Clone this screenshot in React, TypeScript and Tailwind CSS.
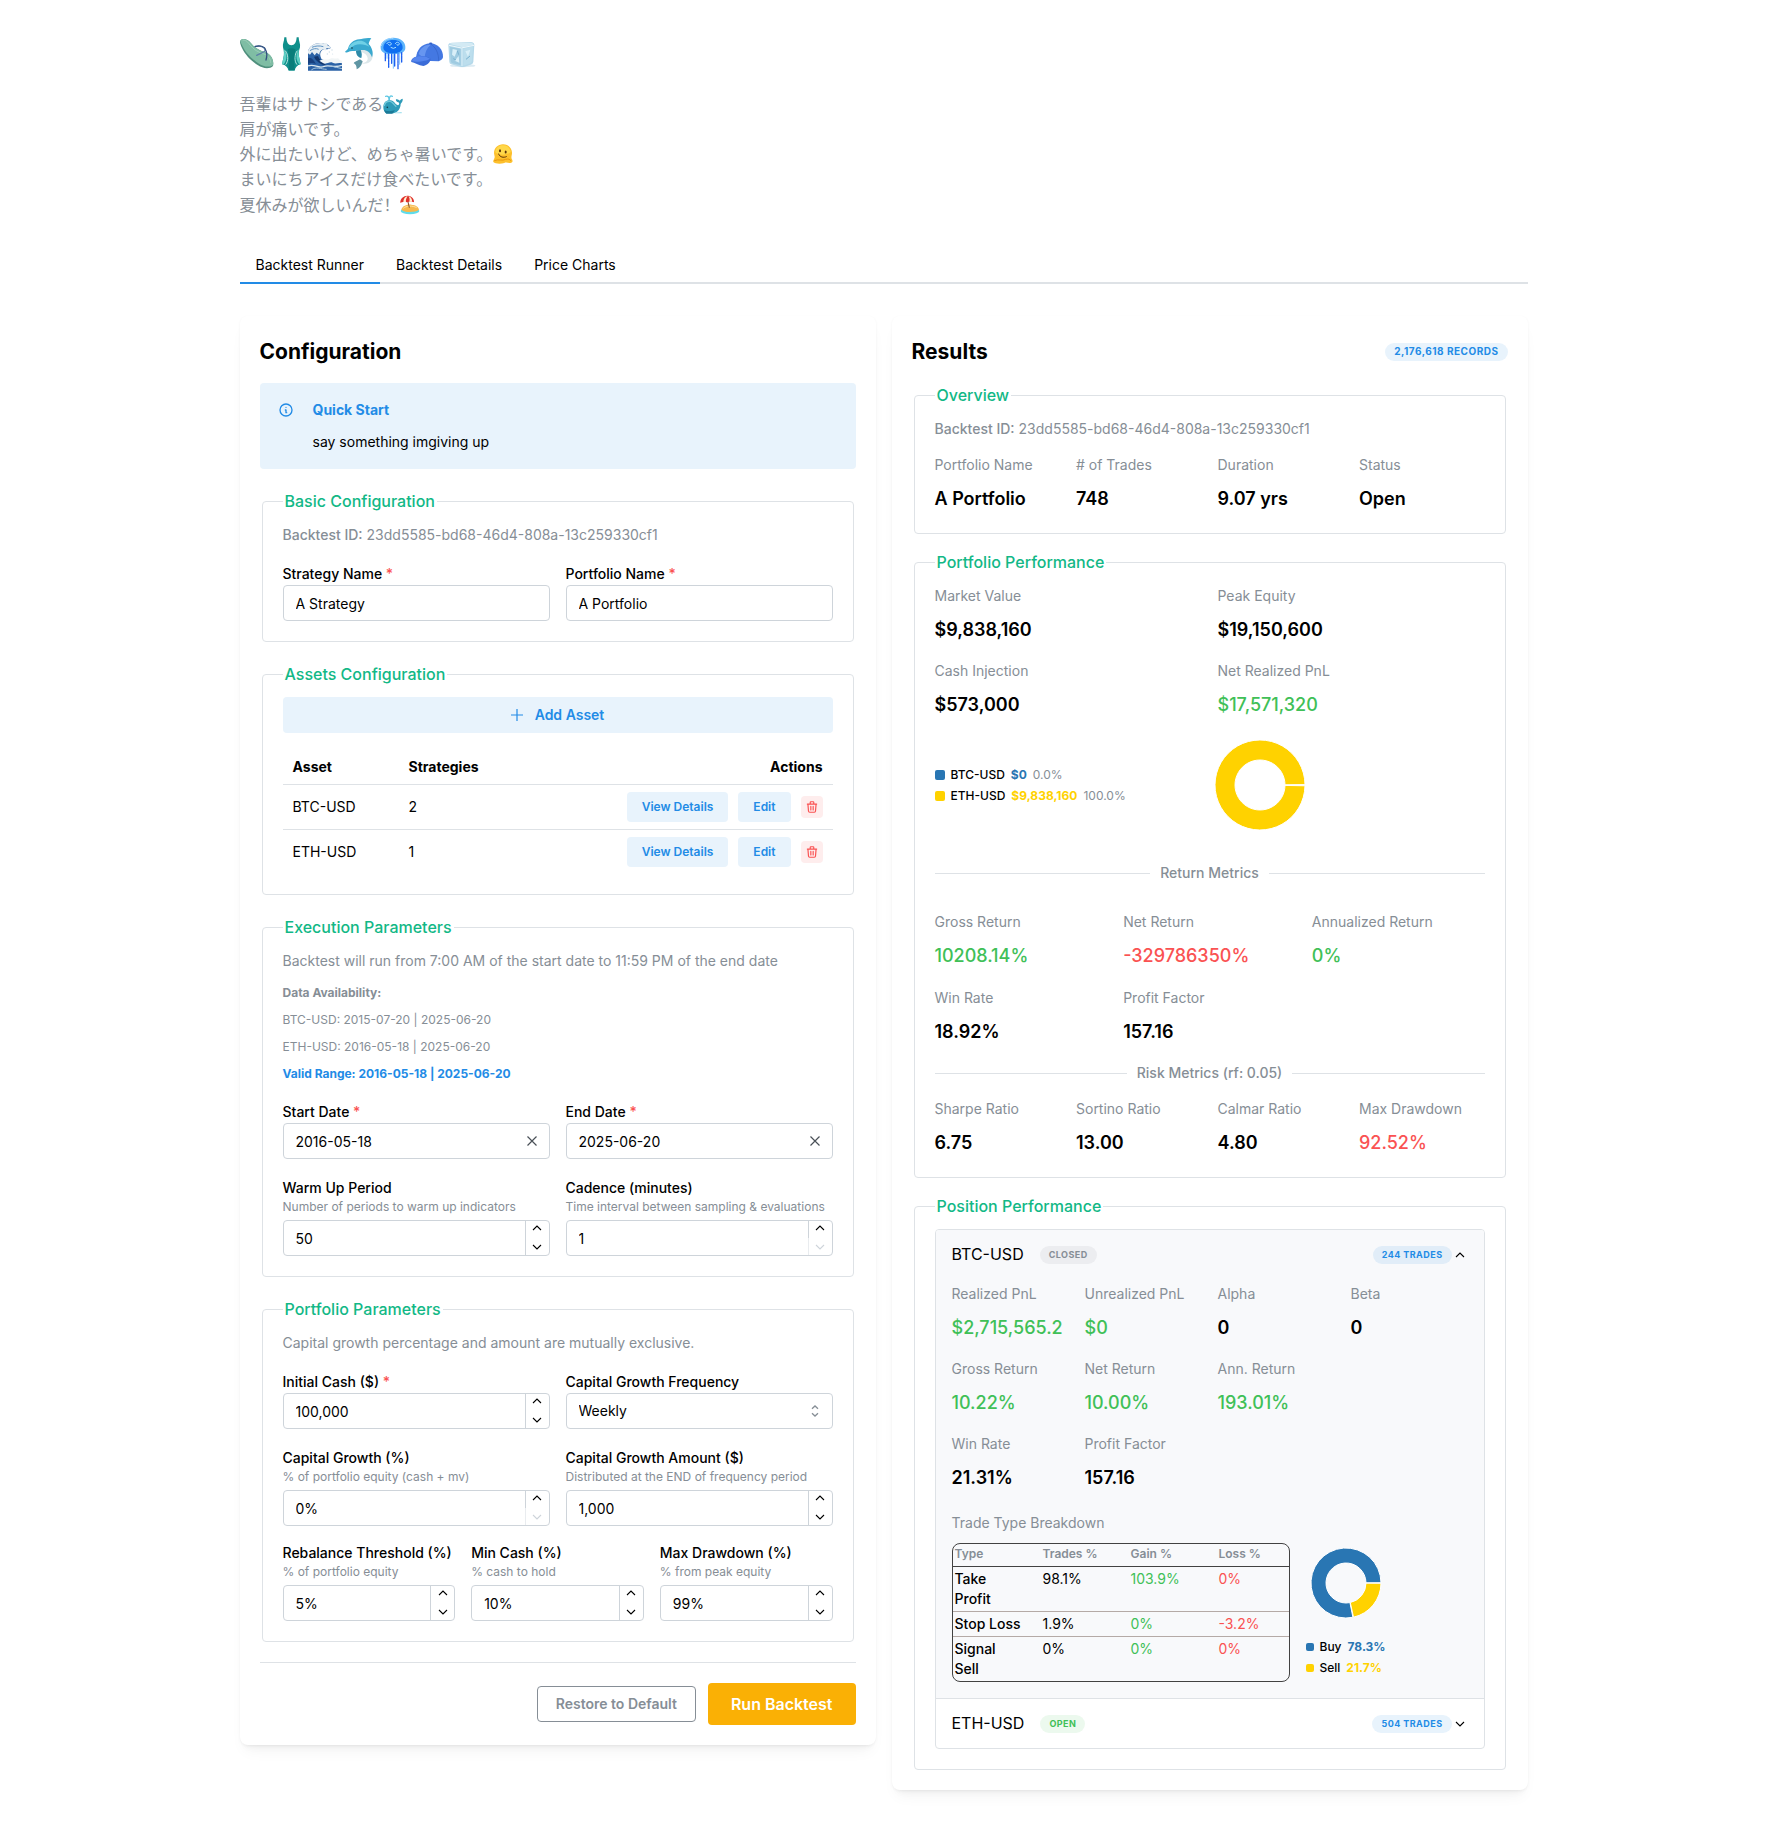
import { useId } from "react";
import type { ReactNode } from "react";

/* ---------- Emoji artwork ---------- */

const FlipFlop = () => (
  <svg viewBox="12 21 102 102" className="size-[34px]" aria-hidden="true">
    <path d="M13 32C17 24 34 26 44 38C54 52 70 62 88 67C106 73 115 92 111 108C102 118 80 116 66 106C46 93 27 74 18 54C13 44 11 37 13 32Z" fill="#4f8f7c" />
    <path d="M14 31C19 24 34 27 44 39C54 53 70 62 88 67C105 73 114 90 111 105C101 113 82 110 69 101C50 89 30 70 21 51C16 41 12 35 14 31Z" fill="#7fbda4" />
    <path d="M20 31C28 29 36 36 42 45C52 58 68 68 84 72C97 76 104 88 104 98" fill="none" stroke="#9ccfb9" strokeWidth="3" />
    <path d="M57 50C72 46 86 50 88 60C87 68 74 68 62 76" fill="none" stroke="#5d7fa8" strokeWidth="4" strokeLinecap="round" />
    <path d="M58 49C74 46 87 50 89 60C94 70 93 80 90 90" fill="none" stroke="#33507f" strokeWidth="4" strokeLinecap="round" />
  </svg>
);

const Swimsuit = () => (
  <svg viewBox="114 21 102 102" className="size-[34px]" aria-hidden="true">
    <path d="M145 22L151 22C152 38 157 46 166 46C176 46 181 38 182 22L188 22C188 34 194 42 192 52C188 64 187 72 190 84L194 103C184 105 178 112 176 122L158 122C155 112 149 105 138 103L142 84C145 72 144 64 141 52C139 42 145 34 145 22Z" fill="#0f8f8b" />
    <path d="M144 58C154 70 154 90 144 102L138 103L142 84C145 72 145 66 144 58Z" fill="#5fd0c5" />
    <path d="M189 58C179 70 179 90 189 102L194 103L190 84C187 72 187 66 189 58Z" fill="#5fd0c5" />
    <path d="M148 62C157 74 158 92 149 104M184 62C175 74 174 92 183 104" fill="none" stroke="#d8f5ee" strokeWidth="2.5" />
    <path d="M155 58C160 75 160 95 158 120L176 120C174 95 174 75 178 58C170 54 162 54 155 58Z" fill="#0a7d7a" />
  </svg>
);

const Wave = () => (
  <svg viewBox="216 21 102 102" className="size-[34px]" aria-hidden="true">
    <path d="M216 62C224 44 244 36 262 40C274 42 282 48 284 54C278 60 270 56 264 58C252 62 250 74 256 86C268 96 286 86 300 92C308 94 314 96 318 94V122H216Z" fill="#2b62a6" />
    <path d="M216 62C224 44 244 36 262 40L272 38L274 46L284 50L280 56L272 54L268 62L262 58C254 60 250 66 250 74L242 68L236 76L228 66L222 74L216 70Z" fill="#e6eef3" />
    <path d="M216 84C226 80 234 92 240 102C230 98 222 98 216 102Z" fill="#17407f" />
    <path d="M234 80C240 94 254 104 270 106C258 92 250 90 246 78Z" fill="#12376f" />
    <path d="M250 92C262 84 272 92 282 86C292 82 300 88 306 84C310 90 314 92 318 92V100C306 96 300 104 290 98C280 94 272 104 262 100Z" fill="#f1f5f6" />
    <path d="M216 108C234 100 246 116 262 110C280 102 292 116 318 106" fill="none" stroke="#dbe8ef" strokeWidth="4" />
    <path d="M226 120C240 108 256 118 272 118M284 108C296 112 306 112 318 116" fill="none" stroke="#a7c6dd" strokeWidth="3" />
    <path d="M228 52C236 48 250 46 262 50M222 62C230 56 240 54 248 58" fill="none" stroke="#5f93c4" strokeWidth="3" />
    <g fill="#c9dbe6">
      <circle cx="280" cy="66" r="2" />
      <circle cx="288" cy="60" r="2" />
      <circle cx="274" cy="72" r="2" />
      <circle cx="290" cy="72" r="1.5" />
    </g>
  </svg>
);

const Dolphin = () => (
  <svg viewBox="318 21 102 102" className="size-[34px]" aria-hidden="true">
    <path d="M372 88C362 94 354 96 353 100C358 102 362 106 362 118C372 114 378 104 380 94Z" fill="#5f95a3" />
    <path d="M346 60C360 62 374 62 388 72C400 84 398 98 374 100C398 106 414 92 410 66C406 52 396 46 384 46Z" fill="#dce7ea" />
    <path d="M327 65C330 62 334 59 336 56C340 40 352 30 370 28C380 27 392 22 406 25C402 30 399 36 398 42C408 52 413 68 408 82C402 64 390 58 376 60C362 64 348 62 342 64C336 68 330 69 327 65Z" fill="#3aa9cf" />
    <path d="M338 54C344 38 358 32 372 32C384 32 394 40 400 50C390 44 370 40 356 46C348 50 344 56 338 54Z" fill="#6fd0e6" />
    <path d="M360 62C360 74 366 82 376 84C378 76 378 70 374 60Z" fill="#2e8aa8" />
    <circle cx="348" cy="54" r="2.4" fill="#12323c" />
  </svg>
);

const Jellyfish = () => (
  <svg viewBox="420 21 102 102" className="size-[34px]" aria-hidden="true">
    <path d="M434 54C432 36 450 23 472 23C494 23 510 36 508 54C508 64 498 70 488 72H454C444 70 434 64 434 54Z" fill="#5db4fb" />
    <path d="M442 54C442 38 456 30 472 30C488 30 500 38 500 54C498 64 486 70 472 70C458 70 444 66 442 54Z" fill="#0f6ff0" />
    <path d="M452 42C456 34 466 36 466 42C464 48 456 46 458 42M478 42C480 34 490 36 490 42C488 48 480 46 484 42M464 52Q472 58 480 52" fill="none" stroke="#a9e0ff" strokeWidth="3" />
    <path d="M436 48C440 30 458 25 472 25" fill="none" stroke="#9fd6ff" strokeWidth="3" />
    <g fill="none" stroke="#1d5ff0" strokeWidth="4" strokeLinecap="round">
      <path d="M448 70V92M458 72V112" strokeDasharray="7 2" />
      <path d="M467 72V100M476 72V108" />
      <path d="M486 72V116M497 68V98" strokeDasharray="8 2" />
    </g>
    <path d="M453 72V86M472 72V116M491 72V104" stroke="#7cc0ff" strokeWidth="3" fill="none" />
  </svg>
);

const Cap = () => (
  <svg viewBox="522 21 102 102" className="size-[34px]" aria-hidden="true">
    <path d="M540 84C542 60 556 42 582 40C606 40 622 60 621 82C620 88 614 92 608 94L560 92Z" fill="#4478e2" />
    <path d="M548 72C552 54 566 44 584 44C572 54 566 68 566 86Z" fill="#6796f0" />
    <path d="M584 42C600 52 608 70 608 92" fill="none" stroke="#3462c6" strokeWidth="2" />
    <path d="M540 80C554 76 574 78 584 86C584 94 576 104 562 108C548 106 536 98 526 96C524 88 532 82 540 80Z" fill="#3b6cd8" />
    <path d="M541 80C556 77 572 79 582 86C574 92 548 97 528 94C528 86 534 82 541 80Z" fill="#5686ee" />
    <ellipse cx="584" cy="40" rx="5" ry="2.5" fill="#2f5fca" />
  </svg>
);

const Ice = () => (
  <svg viewBox="624 21 102 102" className="size-[34px]" aria-hidden="true">
    <ellipse cx="680" cy="107" rx="38" ry="5" fill="#dcebf3" />
    <path d="M637 44Q638 38 648 38L704 36Q714 37 715 44L712 96Q711 102 704 104L684 111Q678 112 672 110L646 103Q640 101 640 95Z" fill="#b5d9ea" />
    <path d="M640 42Q642 39 650 39L704 38Q712 39 713 44L680 52Z" fill="#d3eaf4" />
    <path d="M642 50L674 56V106L650 100Q644 98 644 92Z" fill="#9fcbe1" />
    <path d="M682 57L711 49L708 92Q707 98 700 101L682 107Z" fill="#bcdeed" />
    <path d="M650 57L664 60L656 80L648 74ZM688 64L703 59L696 80ZM656 92L668 78L670 98Z" fill="#d9eff8" />
    <path d="M664 62L668 74M690 88L702 78M652 86L660 90" stroke="#79b1cf" strokeWidth="3" />
    <path d="M678 55V108" stroke="#dcf0f8" strokeWidth="3" />
    <path d="M639 46L676 54L714 46" fill="none" stroke="#eef8fc" strokeWidth="3" />
  </svg>
);

const Whale = () => (
  <svg viewBox="442 192 60 60" className="inline-block size-5 align-[-4px]" aria-hidden="true">
    <path d="M460 210C460 202 458 197 450 199M461 210C461 200 464 195 470 199" fill="none" stroke="#5cc6e2" strokeWidth="4" strokeLinecap="round" strokeDasharray="5 2" />
    <path d="M443 232C443 217 452 210 464 211C476 212 478 224 487 226C491 224 492 219 488 217C482 215 480 212 481 208C486 208 490 210 492 212C495 208 498 206 501 206C502 214 498 218 495 222C494 238 486 247 474 250H452C446 246 443 240 443 232Z" fill="#2d9bb8" />
    <path d="M446 228C448 216 456 213 464 214C472 216 474 224 482 230" fill="none" stroke="#6fc7da" strokeWidth="4" />
    <path d="M446 240C454 245 468 244 478 241L470 251H452C448 247 446 244 446 240Z" fill="#1b7997" />
    <circle cx="455" cy="232" r="2.5" fill="#0d3b4d" />
    <path d="M476 248L498 246V250H478Z" fill="#9fe0ee" />
  </svg>
);

const MeltingFace = () => (
  <svg viewBox="822 374 60 60" className="inline-block size-5 align-[-4px]" aria-hidden="true">
    <path d="M825 402C825 386 837 375 852 375C868 375 880 387 879 402C879 408 876 412 878 418C882 424 882 430 874 431C868 432 862 428 856 431C846 434 828 434 823 428C821 422 828 418 827 412Z" fill="#fdc02c" />
    <path d="M829 398C830 385 840 378 852 378C864 378 874 386 875 398C866 408 838 410 829 398Z" fill="#ffd84a" />
    <path d="M826 424C838 418 850 426 860 420C868 418 872 420 876 424" fill="none" stroke="#e8960d" strokeWidth="3" />
    <ellipse cx="843" cy="394" rx="3" ry="4.5" fill="#5b3206" />
    <ellipse cx="860" cy="398" rx="3" ry="4.5" fill="#5b3206" />
    <path d="M839 404C842 414 854 416 862 412" fill="none" stroke="#5b3206" strokeWidth="3" strokeLinecap="round" />
  </svg>
);

const Beach = () => (
  <svg viewBox="538 518 60 60" className="inline-block size-5 align-[-4px]" aria-hidden="true">
    <ellipse cx="568" cy="566" rx="28" ry="10" fill="#5fdceb" />
    <path d="M542 562C546 550 560 546 572 547C586 548 594 554 595 562C586 570 552 572 542 562Z" fill="#f6b84c" />
    <path d="M548 558C556 550 576 549 588 556" fill="none" stroke="#ffe2a0" strokeWidth="3" />
    <path d="M560 530L566 556" stroke="#7a4a2a" strokeWidth="3" />
    <path d="M539 542C538 528 550 519 562 520C574 521 581 530 580 540C572 536 566 537 560 540C552 538 544 538 539 542Z" fill="#e0322b" />
    <path d="M548 539C548 530 553 523 561 521C556 528 555 534 556 539ZM566 538C568 530 566 524 563 521C572 524 575 532 574 538Z" fill="#fff1d6" />
  </svg>
);

/* ---------- Small icons ---------- */

const Chevron = ({ up = false, className = "" }: { up?: boolean; className?: string }) => (
  <svg viewBox="0 0 10 10" className={`size-[10px] ${className}`} fill="none" stroke="currentColor" strokeWidth="1.1" aria-hidden="true">
    <path d={up ? "M1 7L5 3L9 7" : "M1 3L5 7L9 3"} />
  </svg>
);

const CloseIcon = () => (
  <svg viewBox="0 0 10 10" className="size-[10px]" fill="none" stroke="currentColor" strokeWidth="1.2" aria-hidden="true">
    <path d="M0.5 0.5L9.5 9.5M9.5 0.5L0.5 9.5" />
  </svg>
);

const SelectorIcon = () => (
  <svg viewBox="0 0 8 12" className="h-3 w-2" fill="none" stroke="currentColor" strokeWidth="1.3" aria-hidden="true">
    <path d="M1 3.8L4 1L7 3.8M1 8.2L4 11L7 8.2" />
  </svg>
);

const InfoIcon = () => (
  <svg viewBox="0 0 24 24" className="size-4" fill="none" stroke="currentColor" strokeWidth="2" strokeLinecap="round" strokeLinejoin="round" aria-hidden="true">
    <circle cx="12" cy="12" r="9" />
    <path d="M12 8h.01M11 12h1v4h1" />
  </svg>
);

const PlusIcon = () => (
  <svg viewBox="0 0 12 12" className="size-3" fill="none" stroke="currentColor" strokeWidth="1.2" aria-hidden="true">
    <path d="M6 0V12M0 6H12" />
  </svg>
);

const TrashIcon = () => (
  <svg viewBox="0 0 24 24" className="size-[14px]" fill="none" stroke="currentColor" strokeWidth="2" strokeLinecap="round" strokeLinejoin="round" aria-hidden="true">
    <path d="M4 7h16M10 11v6M14 11v6M5 7l1 12a2 2 0 0 0 2 2h8a2 2 0 0 0 2-2l1-12M9 7V4a1 1 0 0 1 1-1h4a1 1 0 0 1 1 1v3" />
  </svg>
);

/* ---------- Donut chart ---------- */

type Slice = { value: number; color: string };

function Donut({ slices, outer, inner, size, stroke }: { slices: Slice[]; outer: number; inner: number; size: number; stroke: string }) {
  const total = slices.reduce((sum, s) => sum + s.value, 0);
  const c = size / 2;
  const point = (r: number, deg: number) => {
    const a = (deg * Math.PI) / 180;
    return `${c + r * Math.cos(a)} ${c - r * Math.sin(a)}`;
  };
  let start = 0;
  return (
    <svg viewBox={`0 0 ${size} ${size}`} width={size} height={size} className="shrink-0" role="img" aria-label="Allocation chart">
      {slices.map((s) => {
        const sweep = Math.min((s.value / total) * 360, 359.5);
        const a0 = start + 0.5;
        const a1 = start + sweep - 0.5;
        start += sweep;
        if (a1 <= a0) return null;
        const large = a1 - a0 > 180 ? 1 : 0;
        return (
          <path
            key={s.color}
            d={`M${point(outer, a0)}A${outer} ${outer} 0 ${large} 0 ${point(outer, a1)}L${point(inner, a1)}A${inner} ${inner} 0 ${large} 1 ${point(inner, a0)}Z`}
            fill={s.color}
            stroke={stroke}
            strokeWidth="1"
          />
        );
      })}
    </svg>
  );
}

/* ---------- Building blocks ---------- */

function Section({ title, children }: { title: string; children: ReactNode }) {
  return (
    <fieldset className="mx-[2px] rounded border border-[#dee2e6] px-5 pt-[10px] pb-5">
      <legend className="px-[2px] text-base leading-[25px] font-medium text-[#12b886]">{title}</legend>
      {children}
    </fieldset>
  );
}

function BacktestId() {
  return (
    <p className="text-sm leading-[21px] text-[#868e96]">
      <span className="font-medium">Backtest ID:</span> 23dd5585-bd68-46d4-808a-13c259330cf1
    </p>
  );
}

function FieldLabel({ id, label, required, hint }: { id: string; label: string; required?: boolean; hint?: string }) {
  return (
    <>
      <label htmlFor={id} className="block pt-[2px] text-sm leading-[22px] font-medium whitespace-nowrap text-black">
        {label}
        {required && <span className="text-[#fa5252]"> *</span>}
      </label>
      {hint && <p className="mb-[5px] text-xs leading-4 whitespace-nowrap text-[#868e96]">{hint}</p>}
    </>
  );
}

const inputClass = "h-full w-full min-w-0 flex-1 bg-transparent pl-3 text-sm text-black outline-none";

type FieldProps = { label: string; value: string; required?: boolean; hint?: string };

function TextField({ label, value, required, clearable }: FieldProps & { clearable?: boolean }) {
  const id = useId();
  return (
    <div>
      <FieldLabel id={id} label={label} required={required} />
      <div className="flex h-9 items-center rounded border border-[#ced4da] bg-white">
        <input id={id} type="text" defaultValue={value} className={inputClass} />
        {clearable && (
          <button type="button" aria-label={`Clear ${label}`} className="mr-3 grid size-[10px] place-items-center text-[#495057]">
            <CloseIcon />
          </button>
        )}
      </div>
    </div>
  );
}

function NumberField({ label, value, required, hint, atMin }: FieldProps & { atMin?: boolean }) {
  const id = useId();
  return (
    <div>
      <FieldLabel id={id} label={label} required={required} hint={hint} />
      <div className="flex h-9 overflow-hidden rounded border border-[#ced4da] bg-white">
        <input id={id} type="text" inputMode="numeric" defaultValue={value} className={inputClass} />
        <div className="flex w-6 shrink-0 flex-col text-black">
          <button type="button" aria-label={`Increase ${label}`} className="flex flex-1 items-start justify-center border-l border-[#ced4da] pt-[2px]">
            <Chevron up />
          </button>
          <button
            type="button"
            aria-label={`Decrease ${label}`}
            disabled={atMin}
            className="flex flex-1 items-end justify-center border-l border-[#ced4da] pb-[3px] disabled:border-[#e9ecef] disabled:text-[#ced4da]"
          >
            <Chevron />
          </button>
        </div>
      </div>
    </div>
  );
}

function SelectField({ label, value }: FieldProps) {
  const id = useId();
  return (
    <div>
      <FieldLabel id={id} label={label} />
      <div className="relative">
        <select id={id} defaultValue={value} className="block h-9 w-full appearance-none rounded border border-[#ced4da] bg-white pl-3 text-sm text-black outline-none">
          <option>Daily</option>
          <option>Weekly</option>
          <option>Monthly</option>
        </select>
        <span className="pointer-events-none absolute inset-y-0 right-[14px] flex items-center text-[#868e96]">
          <SelectorIcon />
        </span>
      </div>
    </div>
  );
}

type Tone = "plain" | "good" | "bad";
const toneClass: Record<Tone, string> = { plain: "font-semibold text-black", good: "font-medium text-[#40c057]", bad: "font-medium text-[#fa5252]" };

function Stat({ label, value, tone = "plain" }: { label: string; value: string; tone?: Tone }) {
  return (
    <div className="min-w-0">
      <p className="text-sm leading-[22px] whitespace-nowrap text-[#868e96]">{label}</p>
      <p className={`mt-2 text-lg leading-[29px] whitespace-nowrap ${toneClass[tone]}`}>{value}</p>
    </div>
  );
}

function Divider({ children }: { children: ReactNode }) {
  return (
    <div className="flex items-center gap-[10px] text-sm leading-[22px] font-medium text-[#868e96]">
      <span className="h-px flex-1 bg-[#dee2e6]" />
      <span>{children}</span>
      <span className="h-px flex-1 bg-[#dee2e6]" />
    </div>
  );
}

type BadgeColor = "blue" | "gray" | "green";
const badgeClass: Record<BadgeColor, string> = {
  blue: "bg-[#228be6]/10 text-[#228be6]",
  gray: "bg-[#868e96]/10 text-[#868e96]",
  green: "bg-[#40c057]/10 text-[#40c057]",
};

function Badge({ color, className = "", children }: { color: BadgeColor; className?: string; children: ReactNode }) {
  return (
    <span className={`inline-flex h-[18px] items-center rounded-full px-[9px] font-bold whitespace-nowrap uppercase ${className} ${badgeClass[color]}`}>
      {children}
    </span>
  );
}

const assets = [
  { symbol: "BTC-USD", strategies: 2 },
  { symbol: "ETH-USD", strategies: 1 },
];

const breakdown = [
  { type: "Take\nProfit", trades: "98.1%", gain: "103.9%", loss: "0%" },
  { type: "Stop Loss", trades: "1.9%", gain: "0%", loss: "-3.2%" },
  { type: "Signal\nSell", trades: "0%", gain: "0%", loss: "0%" },
];

const cardClass = "rounded-lg bg-white p-5 shadow-[0_1px_3px_rgba(0,0,0,0.05),0_10px_15px_-5px_rgba(0,0,0,0.05),0_7px_7px_-5px_rgba(0,0,0,0.04)]";

function Configuration() {
  return (
    <section className={cardClass}>
      <h2 className="text-[21px] leading-[31px] font-bold">Configuration</h2>

      <div role="note" className="mt-4 flex rounded bg-[#228be6]/10 p-4">
        <span className="mr-[17px] grid h-[22px] w-5 place-items-center text-[#228be6]">
          <InfoIcon />
        </span>
        <div className="text-sm leading-[22px]">
          <p className="font-bold text-[#228be6]">Quick Start</p>
          <p className="mt-[10px] text-black">say something imgiving up</p>
        </div>
      </div>

      <div className="mt-5 flex flex-col gap-5">
        <Section title="Basic Configuration">
          <BacktestId />
          <div className="mt-4 grid grid-cols-2 gap-4">
            <TextField label="Strategy Name" value="A Strategy" required />
            <TextField label="Portfolio Name" value="A Portfolio" required />
          </div>
        </Section>

        <Section title="Assets Configuration">
          <button type="button" className="flex h-9 w-full items-center justify-center gap-3 rounded bg-[#228be6]/10 text-sm font-semibold text-[#228be6]">
            <PlusIcon />
            Add Asset
          </button>
          <table className="mt-4 w-full text-left text-sm leading-[22px]">
            <thead className="leading-[21px]">
              <tr className="border-b border-[#dee2e6]">
                <th className="w-[116px] px-[10px] py-[7px] font-bold">Asset</th>
                <th className="px-[10px] py-[7px] font-bold">Strategies</th>
                <th className="px-[10px] py-[7px] text-right font-bold">Actions</th>
              </tr>
            </thead>
            <tbody>
              {assets.map((a) => (
                <tr key={a.symbol} className="border-[#dee2e6] not-last:border-b">
                  <td className="px-[10px] py-[7px]">{a.symbol}</td>
                  <td className="px-[10px] py-[7px]">{a.strategies}</td>
                  <td className="px-[10px] py-[7px]">
                    <div className="flex items-center justify-end gap-[10px]">
                      <button type="button" className="h-[30px] rounded bg-[#228be6]/10 px-[15px] text-xs font-semibold text-[#228be6]">
                        View Details
                      </button>
                      <button type="button" className="h-[30px] rounded bg-[#228be6]/10 px-[15px] text-xs font-semibold text-[#228be6]">
                        Edit
                      </button>
                      <button type="button" aria-label={`Delete ${a.symbol}`} className="grid size-[22px] place-items-center rounded bg-[#fa5252]/10 text-[#fa5252]">
                        <TrashIcon />
                      </button>
                    </div>
                  </td>
                </tr>
              ))}
            </tbody>
          </table>
        </Section>

        <Section title="Execution Parameters">
          <p className="text-sm leading-[21px] text-[#868e96]">Backtest will run from 7:00 AM of the start date to 11:59 PM of the end date</p>
          <div className="mt-3 flex flex-col gap-2 text-xs leading-[19px] text-[#868e96]">
            <p className="font-bold">Data Availability:</p>
            <p>BTC-USD: 2015-07-20 | 2025-06-20</p>
            <p>ETH-USD: 2016-05-18 | 2025-06-20</p>
            <p className="font-bold text-[#228be6]">Valid Range: 2016-05-18 | 2025-06-20</p>
          </div>
          <div className="mt-4 grid grid-cols-2 gap-4">
            <TextField label="Start Date" value="2016-05-18" required clearable />
            <TextField label="End Date" value="2025-06-20" required clearable />
            <NumberField label="Warm Up Period" value="50" hint="Number of periods to warm up indicators" />
            <NumberField label="Cadence (minutes)" value="1" hint="Time interval between sampling & evaluations" atMin />
          </div>
        </Section>

        <Section title="Portfolio Parameters">
          <p className="text-sm leading-[21px] text-[#868e96]">Capital growth percentage and amount are mutually exclusive.</p>
          <div className="mt-4 grid grid-cols-2 gap-4">
            <NumberField label="Initial Cash ($)" value="100,000" required />
            <SelectField label="Capital Growth Frequency" value="Weekly" />
            <NumberField label="Capital Growth (%)" value="0%" hint="% of portfolio equity (cash + mv)" atMin />
            <NumberField label="Capital Growth Amount ($)" value="1,000" hint="Distributed at the END of frequency period" />
          </div>
          <div className="mt-[14px] grid grid-cols-3 gap-4">
            <NumberField label="Rebalance Threshold (%)" value="5%" hint="% of portfolio equity" />
            <NumberField label="Min Cash (%)" value="10%" hint="% cash to hold" />
            <NumberField label="Max Drawdown (%)" value="99%" hint="% from peak equity" />
          </div>
        </Section>
      </div>

      <div className="mt-5 flex items-center justify-end gap-3 border-t border-[#dee2e6] pt-5">
        <button type="button" className="h-9 rounded border border-[#868e96] px-[18px] text-sm font-semibold text-[#868e96]">
          Restore to Default
        </button>
        <button type="button" className="h-[42px] rounded bg-[#fab005] px-[23px] text-base font-semibold text-white">
          Run Backtest
        </button>
      </div>
    </section>
  );
}

function Results() {
  return (
    <section className={cardClass}>
      <div className="flex items-center justify-between">
        <h2 className="text-[21px] leading-[31px] font-bold">Results</h2>
        <Badge color="blue" className="text-[10px] tracking-wider">2,176,618 records</Badge>
      </div>

      <div className="mt-4 flex flex-col gap-4">
        <Section title="Overview">
          <BacktestId />
          <div className="mt-[15px] grid grid-cols-4 gap-4">
            <Stat label="Portfolio Name" value="A Portfolio" />
            <Stat label="# of Trades" value="748" />
            <Stat label="Duration" value="9.07 yrs" />
            <Stat label="Status" value="Open" />
          </div>
        </Section>

        <Section title="Portfolio Performance">
          <div className="grid grid-cols-2 gap-4">
            <Stat label="Market Value" value="$9,838,160" />
            <Stat label="Peak Equity" value="$19,150,600" />
            <Stat label="Cash Injection" value="$573,000" />
            <Stat label="Net Realized PnL" value="$17,571,320" tone="good" />
          </div>
          <div className="mt-4 grid grid-cols-2 items-center gap-4">
            <ul className="text-xs leading-[21px] whitespace-nowrap">
              <li className="flex items-center gap-[6px]">
                <span className="size-[10px] rounded-[2px] bg-[#2976b3]" />
                <span className="font-medium">BTC-USD</span>
                <span className="font-bold text-[#2976b3]">$0</span>
                <span className="text-[#868e96]">0.0%</span>
              </li>
              <li className="flex items-center gap-[6px]">
                <span className="size-[10px] rounded-[2px] bg-[#ffd200]" />
                <span className="font-medium">ETH-USD</span>
                <span className="font-bold text-[#ffd200]">$9,838,160</span>
                <span className="text-[#868e96]">100.0%</span>
              </li>
            </ul>
            <div className="flex h-[100px] w-[84px] items-center justify-center">
              <Donut slices={[{ value: 0, color: "#2976b3" }, { value: 100, color: "#ffd200" }]} outer={45} inner={25} size={100} stroke="#ffffff" />
            </div>
          </div>
          <div className="mt-[27px]">
            <Divider>Return Metrics</Divider>
          </div>
          <div className="mt-[27px] grid grid-cols-3 gap-x-4 gap-y-[17px]">
            <Stat label="Gross Return" value="10208.14%" tone="good" />
            <Stat label="Net Return" value="-329786350%" tone="bad" />
            <Stat label="Annualized Return" value="0%" tone="good" />
            <Stat label="Win Rate" value="18.92%" />
            <Stat label="Profit Factor" value="157.16" />
          </div>
          <div className="mt-4">
            <Divider>Risk Metrics (rf: 0.05)</Divider>
          </div>
          <div className="mt-[14px] grid grid-cols-4 gap-4">
            <Stat label="Sharpe Ratio" value="6.75" />
            <Stat label="Sortino Ratio" value="13.00" />
            <Stat label="Calmar Ratio" value="4.80" />
            <Stat label="Max Drawdown" value="92.52%" tone="bad" />
          </div>
        </Section>

        <Section title="Position Performance">
          <div className="overflow-hidden rounded border border-[#dee2e6]">
            <div className="border-b border-[#dee2e6] bg-[#f8f9fb]">
              <PositionHeader symbol="BTC-USD" status="Closed" statusColor="gray" trades="244 trades" open />
              <div className="px-4 pt-1 pb-4">
                <div className="grid grid-cols-4 gap-4">
                  <Stat label="Realized PnL" value="$2,715,565.2" tone="good" />
                  <Stat label="Unrealized PnL" value="$0" tone="good" />
                  <Stat label="Alpha" value="0" />
                  <Stat label="Beta" value="0" />
                  <Stat label="Gross Return" value="10.22%" tone="good" />
                  <Stat label="Net Return" value="10.00%" tone="good" />
                  <Stat label="Ann. Return" value="193.01%" tone="good" />
                  <div />
                  <Stat label="Win Rate" value="21.31%" />
                  <Stat label="Profit Factor" value="157.16" />
                </div>
                <h3 className="mt-5 text-sm leading-[22px] text-[#868e96]">Trade Type Breakdown</h3>
                <div className="mt-[9px] flex items-start gap-4">
                  <div className="w-[338px] overflow-hidden rounded-lg border border-[#424242]">
                    <table className="w-full table-fixed text-left text-sm leading-5">
                      <thead className="text-xs leading-[18px] text-[#868e96]">
                        <tr className="border-b border-[#424242]">
                          <th className="w-[88px] px-[2px] pt-px pb-[3px] font-semibold">Type</th>
                          <th className="w-[88px] px-[2px] pt-px pb-[3px] font-semibold">Trades %</th>
                          <th className="w-[88px] px-[2px] pt-px pb-[3px] font-semibold">Gain %</th>
                          <th className="px-[2px] pt-px pb-[3px] font-semibold">Loss %</th>
                        </tr>
                      </thead>
                      <tbody>
                        {breakdown.map((row) => (
                          <tr key={row.type} className="border-[#b5aaa6] align-top not-last:border-b">
                            <th scope="row" className="p-[2px] font-medium whitespace-pre-line">{row.type}</th>
                            <td className="p-[2px]">{row.trades}</td>
                            <td className="p-[2px] text-[#40c057]">{row.gain}</td>
                            <td className="p-[2px] text-[#fa5252]">{row.loss}</td>
                          </tr>
                        ))}
                      </tbody>
                    </table>
                  </div>
                  <div>
                    <Donut slices={[{ value: 78.3, color: "#2976b3" }, { value: 21.7, color: "#ffd200" }]} outer={35} inner={20} size={80} stroke="#ffffff" />
                    <ul className="mt-[13px] text-xs leading-[21px] whitespace-nowrap">
                      <li className="flex items-center gap-[6px]">
                        <span className="size-2 rounded-[2px] bg-[#2976b3]" />
                        <span className="font-medium">Buy</span>
                        <span className="font-bold text-[#2976b3]">78.3%</span>
                      </li>
                      <li className="flex items-center gap-[6px]">
                        <span className="size-2 rounded-[2px] bg-[#ffd200]" />
                        <span className="font-medium">Sell</span>
                        <span className="font-bold text-[#ffd200]">21.7%</span>
                      </li>
                    </ul>
                  </div>
                </div>
              </div>
            </div>
            <PositionHeader symbol="ETH-USD" status="Open" statusColor="green" trades="504 trades" />
          </div>
        </Section>
      </div>
    </section>
  );
}

function PositionHeader({ symbol, status, statusColor, trades, open = false }: { symbol: string; status: string; statusColor: BadgeColor; trades: string; open?: boolean }) {
  return (
    <button type="button" aria-expanded={open} className="flex w-full items-center py-3 pr-[19px] pl-4 text-left">
      <span className="text-base leading-[25px]">{symbol}</span>
      <Badge color={statusColor} className="ml-4 text-[9px] tracking-wider">{status}</Badge>
      <span className="flex-1" />
      <Badge color="blue" className="text-[9px] tracking-wider">{trades}</Badge>
      <Chevron up={open} className="ml-[3px]" />
    </button>
  );
}

const tabs = ["Backtest Runner", "Backtest Details", "Price Charts"];

export default function App() {
  return (
    <main className="min-h-screen bg-white pb-8 font-['Inter','Noto_Sans_CJK_JP',sans-serif] text-black">
      <div className="mx-auto max-w-[1320px] px-4 pt-8">
        <h1 className="flex h-11 items-center" aria-label="Summer">
          <FlipFlop />
          <Swimsuit />
          <Wave />
          <Dolphin />
          <Jellyfish />
          <Cap />
          <Ice />
        </h1>

        <p lang="ja" className="mt-4 text-base leading-[25px] text-[#868e96]">
          吾輩はサトシである<Whale />
          <br />
          肩が痛いです。
          <br />
          外に出たいけど、めちゃ暑いです。<MeltingFace />
          <br />
          まいにちアイスだけ食べたいです。
          <br />
          夏休みが欲しいんだ<span lang="zh-CN" className="font-['Noto_Sans_CJK_SC',sans-serif]">！</span><Beach />
        </p>

        <div role="tablist" className="mt-[30px] flex border-b-2 border-[#dee2e6]">
          {tabs.map((tab, i) => (
            <button
              key={tab}
              type="button"
              role="tab"
              aria-selected={i === 0}
              className="-mb-[2px] border-b-2 border-transparent px-4 py-[10px] text-sm leading-[14px] aria-selected:border-[#228be6]"
            >
              {tab}
            </button>
          ))}
        </div>

        <div className="mt-8 grid grid-cols-2 items-start gap-4">
          <Configuration />
          <Results />
        </div>
      </div>
    </main>
  );
}
